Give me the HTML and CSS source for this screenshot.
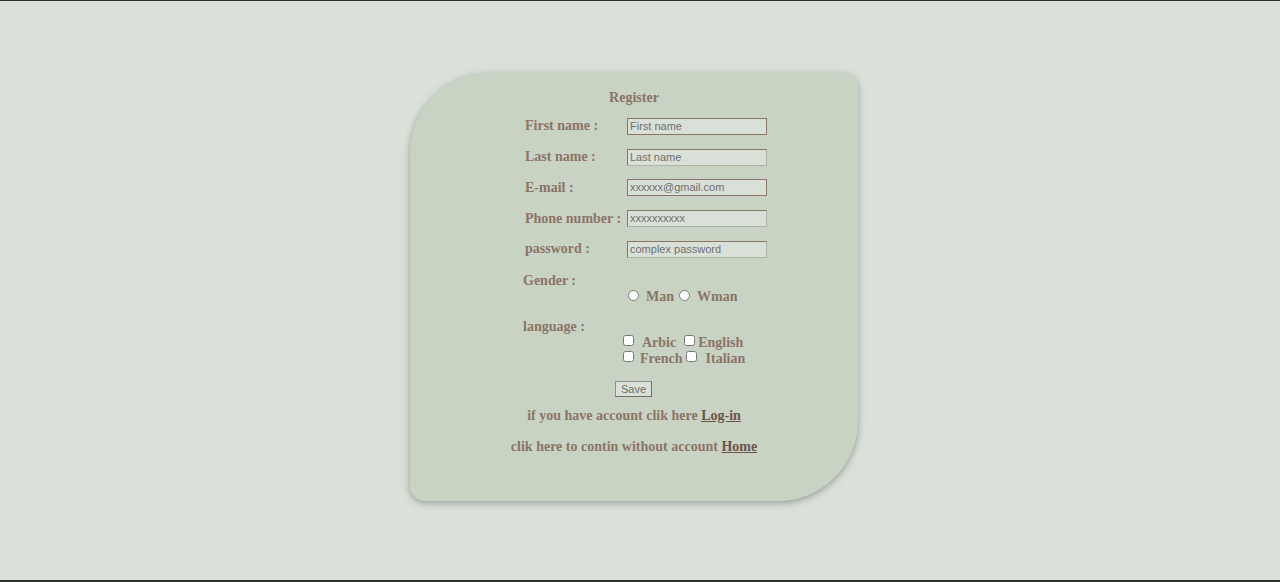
FILE: index.html
```html
<!DOCTYPE html>
<html lang="en">
<head>
<meta charset="utf-8">
<title>Register</title>
<link rel="stylesheet" href="styles.css">
</head>
<body>
<div class="page">
  <form class="card">
    <h1 class="title">Register</h1>
    <div class="row">
      <label class="label">First name :</label>
      <input class="field dark" type="text" placeholder="First name">
    </div>
    <div class="row">
      <label class="label">Last name :</label>
      <input class="field" type="text" placeholder="Last name">
    </div>
    <div class="row">
      <label class="label">E-mail :</label>
      <input class="field dark" type="text" placeholder="xxxxxx@gmail.com">
    </div>
    <div class="row">
      <label class="label">Phone number :</label>
      <input class="field" type="text" placeholder="xxxxxxxxxx">
    </div>
    <div class="row">
      <label class="label">password :</label>
      <input class="field" type="password" placeholder="complex password">
    </div>
    <div class="group gender">
      <div class="label line">Gender :</div>
      <div class="options line">
        <input class="radio" type="radio" name="g"><span class="opt man">Man</span>
        <input class="radio" type="radio" name="g"><span class="opt">Wman</span>
      </div>
    </div>
    <div class="group language">
      <div class="label line">language :</div>
      <div class="options line checks">
        <input class="check" type="checkbox"><span class="opt arbic">Arbic</span>
        <input class="check" type="checkbox"><span class="opt english">English</span>
      </div>
      <div class="options line checks">
        <input class="check" type="checkbox"><span class="opt french">French</span>
        <input class="check" type="checkbox"><span class="opt italian">Italian</span>
      </div>
    </div>
    <div class="save-row"><button type="button" class="save">Save</button></div>
    <p class="note first">if you have account clik here <a href="#">Log-in</a></p>
    <p class="note second">clik here to contin without account <a href="#">Home</a></p>
  </form>
</div>
</body>
</html>
```
FILE: styles.css
```css
html, body {
  margin: 0;
  padding: 0;
}
body {
  background: #dae1d9;
  font-family: "Liberation Serif", "Times New Roman", serif;
}
.page {
  box-sizing: border-box;
  height: 582px;
  border-top: 1px solid #2b302b;
  border-bottom: 2px solid #2b302b;
  padding-top: 72px;
}
.card {
  box-sizing: border-box;
  width: 448px;
  height: 428px;
  margin-left: 410px;
  background: #c8d3c3;
  border-radius: 80px 15px 80px 15px;
  box-shadow: 0 2px 7px rgba(90, 100, 90, 0.55);
  padding-top: 16px;
  color: #8b7468;
  font-weight: bold;
  font-size: 14px;
}
.title {
  margin: 0 0 4px;
  font-size: 14px;
  line-height: 18px;
  text-align: center;
}
.row {
  display: flex;
  align-items: center;
  height: 30.75px;
  padding-left: 115px;
}
.row .label {
  width: 102px;
}
.field {
  box-sizing: border-box;
  width: 140px;
  height: 17px;
  padding: 0 2px 1px;
  margin: 0;
  background: #d9e0d8;
  border: 1px solid #8b7468;
  border-right-color: #aeb3a6;
  border-bottom-color: #aeb3a6;
  font-family: "Liberation Sans", Arial, sans-serif;
  font-size: 11px;
  color: #666;
  outline: none;
}
.field.dark {
  border-color: #8b7468;
}
.field::placeholder {
  color: #6f6f6f;
}
.group {
  padding-left: 113px;
}
.line {
  height: 16px;
  line-height: 16px;
}
.gender {
  margin-top: 8px;
}
.options {
  display: flex;
  align-items: center;
  padding-left: 105px;
}
.radio {
  width: 11px;
  height: 11px;
  margin: 0 7px 2px 0;
}
.opt.man {
  margin-right: 5px;
}
.language {
  margin-top: 14px;
}
.checks {
  padding-left: 100px;
}
.check {
  width: 11px;
  height: 11px;
  margin: 0 0 4px 0;
}
.arbic {
  margin-left: 8px;
  margin-right: 8px;
}
.english {
  margin-left: 3px;
}
.french {
  margin-left: 6px;
  margin-right: 3px;
}
.italian {
  margin-left: 9px;
}
.save-row {
  display: flex;
  justify-content: center;
  margin-top: 14px;
  padding-right: 1px;
}
.save {
  box-sizing: border-box;
  width: 37px;
  height: 16px;
  padding: 0;
  background: #d9e0d8;
  border: 1px solid #8e8e8e;
  border-right-color: #6f6f6f;
  border-bottom-color: #6f6f6f;
  font-family: "Liberation Sans", Arial, sans-serif;
  font-size: 11px;
  color: #6e6e6e;
  line-height: 14px;
}
.note {
  margin: 0;
  line-height: 16px;
  text-align: center;
}
.note.first {
  margin-top: 11px;
}
.note.second {
  margin-top: 15px;
}
.note a {
  color: #6c5448;
  text-decoration: underline;
}
```
